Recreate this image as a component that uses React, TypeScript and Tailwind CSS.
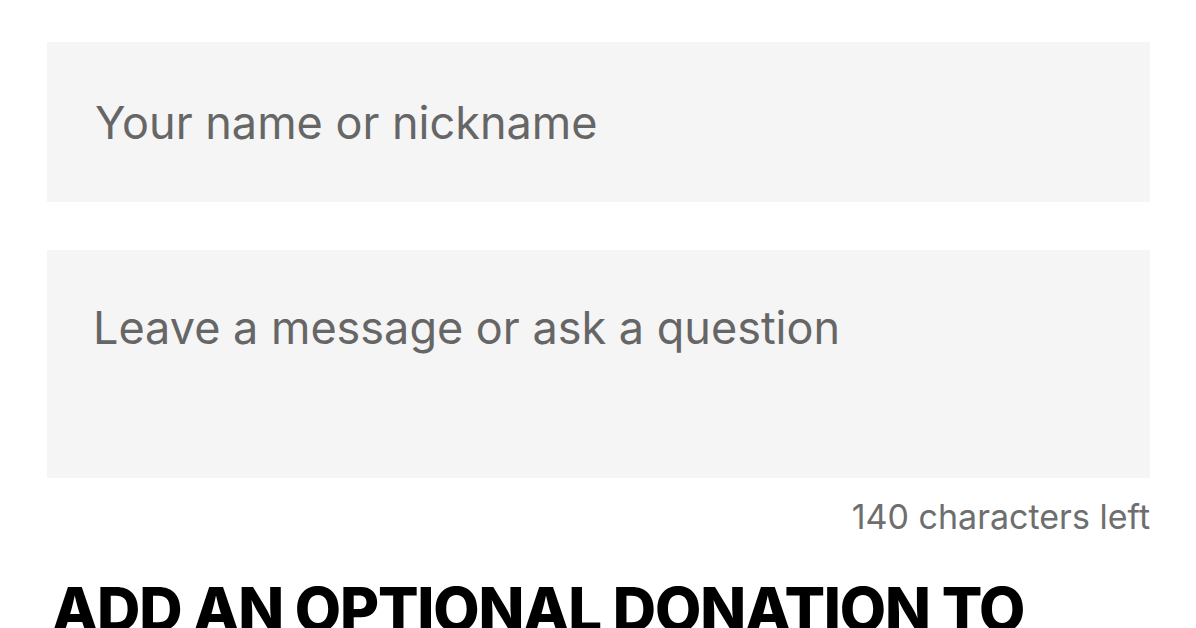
export default function App() {
  return (
    <div
      className="min-h-screen bg-white px-[47px] pt-[42px] overflow-hidden"
      style={{ fontFamily: "Inter, 'Liberation Sans', sans-serif" }}
    >
      <form className="flex flex-col w-[1103px]">
        <input
          type="text"
          placeholder="Your name or nickname"
          className="h-[160px] w-full bg-[#f5f5f5] pl-[48px] text-[45px] text-[#222] placeholder:text-[#666] focus:outline-none"
        />
        <textarea
          placeholder="Leave a message or ask a question"
          className="mt-[48px] h-[228px] w-full resize-none bg-[#f5f5f5] pl-[46px] pt-[52px] text-[45px] leading-[52px] text-[#222] placeholder:text-[#666] focus:outline-none"
        />
        <div className="mt-[19px] text-right text-[34px] leading-[40px] text-[#6e6e6e]">
          140 characters left
        </div>
        <h2 className="mt-[40px] pl-[5px] text-[60px] font-extrabold leading-[64px] tracking-[-1.2px] text-black">
          ADD AN OPTIONAL DONATION TO
        </h2>
      </form>
    </div>
  );
}
